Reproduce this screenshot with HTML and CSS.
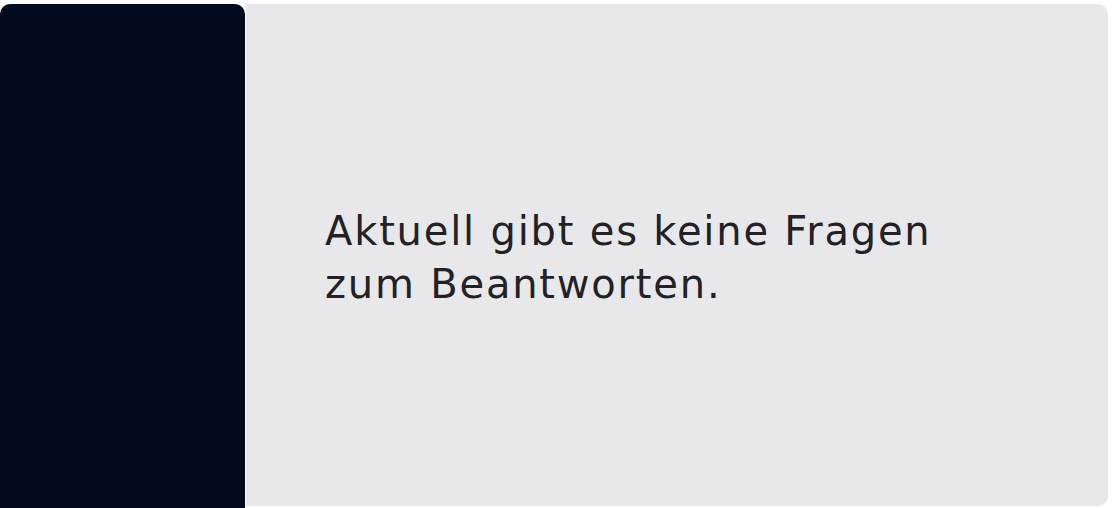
FILE: index.html
```html
<!DOCTYPE html>
<html lang="de">
<head>
<meta charset="utf-8">
<title>Fragen</title>
<link rel="stylesheet" href="styles.css">
</head>
<body>
<div class="layout">
  <aside class="sidebar"></aside>
  <main class="content">
    <p class="empty">Aktuell gibt es keine Fragen zum Beantworten.</p>
  </main>
</div>
</body>
</html>
```
FILE: styles.css
```css
html, body {
  margin: 0;
  padding: 0;
  background: #ffffff;
  overflow: hidden;
}
.layout {
  display: flex;
  align-items: flex-start;
  gap: 1px;
  padding: 4px 4px 0 0;
  height: 508px;
  box-sizing: border-box;
}
.sidebar {
  width: 245px;
  height: 504px;
  flex: none;
  background: #040b1e;
  border-radius: 10px 10px 0 0;
}
.content {
  flex: 1;
  height: 502px;
  background: #e8e8ea;
  border-radius: 0 10px 10px 0;
  display: flex;
  align-items: center;
  padding: 6px 0 0 79px;
  box-sizing: border-box;
}
.empty {
  margin: 0;
  max-width: 660px;
  font-family: "DejaVu Sans", "Open Sans", sans-serif;
  font-size: 40px;
  line-height: 53px;
  letter-spacing: 1.8px;
  color: #222226;
}
```
